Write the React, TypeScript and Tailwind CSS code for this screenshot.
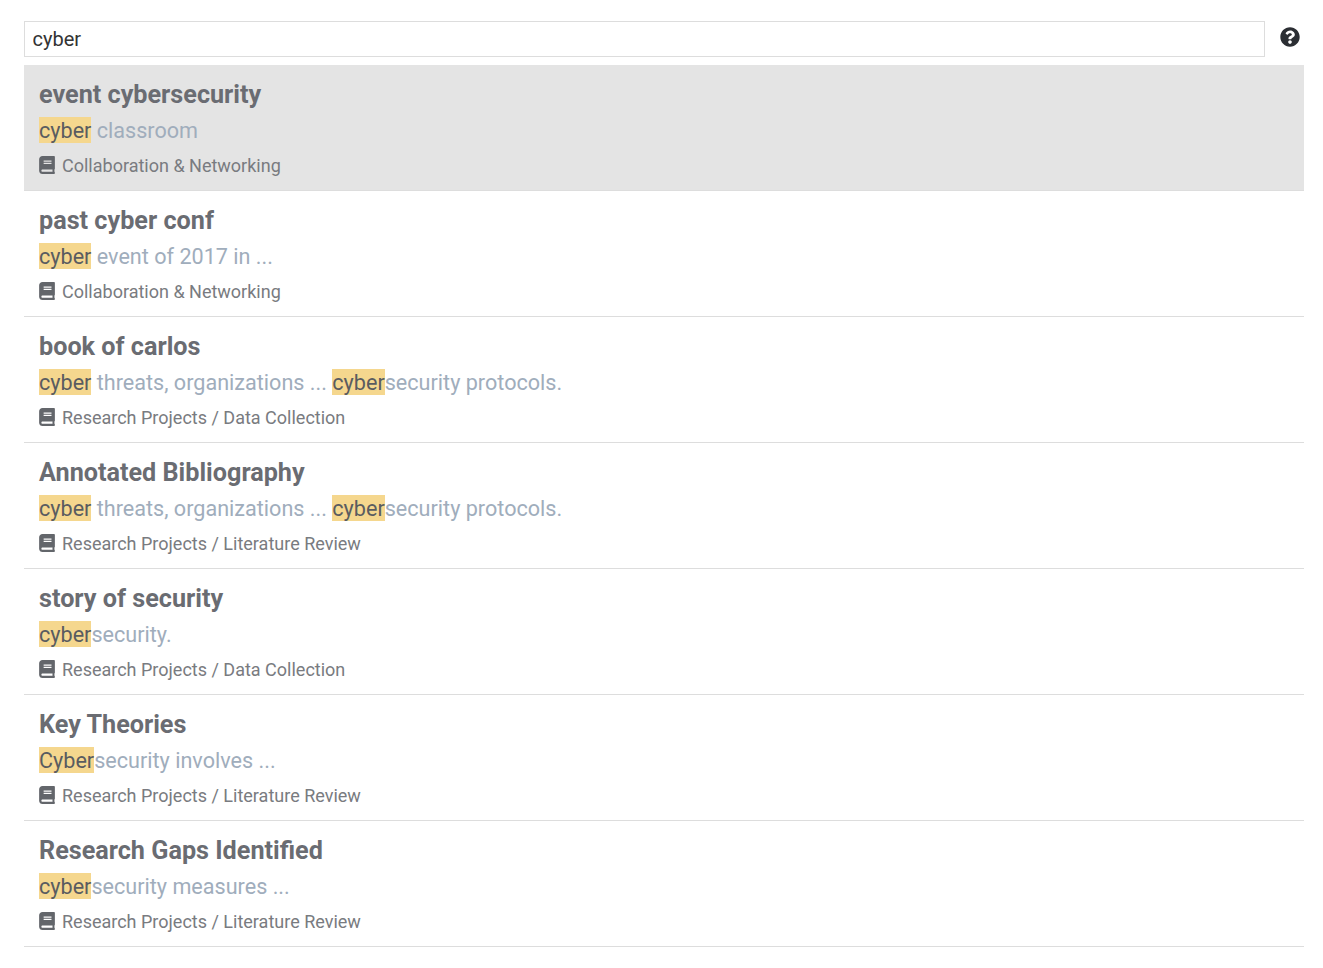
import { FaBook, FaQuestionCircle } from "react-icons/fa";

type Part = { text: string; hit?: boolean };

interface Result {
  title: string;
  snippet: Part[];
  path: string;
}

const results: Result[] = [
  {
    title: "event cybersecurity",
    snippet: [{ text: "cyber", hit: true }, { text: " classroom" }],
    path: "Collaboration & Networking",
  },
  {
    title: "past cyber conf",
    snippet: [{ text: "cyber", hit: true }, { text: " event of 2017 in ..." }],
    path: "Collaboration & Networking",
  },
  {
    title: "book of carlos",
    snippet: [
      { text: "cyber", hit: true },
      { text: " threats, organizations ... " },
      { text: "cyber", hit: true },
      { text: "security protocols." },
    ],
    path: "Research Projects / Data Collection",
  },
  {
    title: "Annotated Bibliography",
    snippet: [
      { text: "cyber", hit: true },
      { text: " threats, organizations ... " },
      { text: "cyber", hit: true },
      { text: "security protocols." },
    ],
    path: "Research Projects / Literature Review",
  },
  {
    title: "story of security",
    snippet: [{ text: "cyber", hit: true }, { text: "security." }],
    path: "Research Projects / Data Collection",
  },
  {
    title: "Key Theories",
    snippet: [{ text: "Cyber", hit: true }, { text: "security involves ..." }],
    path: "Research Projects / Literature Review",
  },
  {
    title: "Research Gaps Identified",
    snippet: [{ text: "cyber", hit: true }, { text: "security measures ..." }],
    path: "Research Projects / Literature Review",
  },
];

function ResultRow({ result, active }: { result: Result; active: boolean }) {
  return (
    <div
      className={`h-[126px] border-b border-[#dddddd] px-[15px] pt-[14px] ${
        active ? "bg-[#e4e4e4]" : "bg-white"
      }`}
    >
      <div className="h-[32px] text-[25.2px] leading-[32px] font-bold text-[#6a6c72]">
        {result.title}
      </div>
      <div className="mt-[6px] h-[26px] text-[21.6px] leading-[26px] whitespace-pre text-[#a0adbc]">
        {result.snippet.map((part, i) =>
          part.hit ? (
            <mark
              key={i}
              className="inline-block h-[26px] bg-[#f5d78e] leading-[28px] text-[#5a5c60]"
            >
              {part.text}
            </mark>
          ) : (
            <span key={i}>{part.text}</span>
          ),
        )}
      </div>
      <div className="mt-[9px] flex h-[26px] items-center text-[18px] text-[#797b80]">
        <FaBook className="mr-[7px] h-[18px] w-[16px] text-[#63666b]" />
        <span>{result.path}</span>
      </div>
    </div>
  );
}

export default function App() {
  return (
    <div className="min-h-[968px] bg-white px-[24px] pt-[21px] font-['Roboto',sans-serif]">
      <div className="flex items-start">
        <input
          readOnly
          value="cyber"
          className="h-[36px] w-[1241px] shrink-0 border border-[#dddddd] px-[7.5px] text-[20px] text-[#333333] outline-none"
        />
        <FaQuestionCircle className="mt-[6px] ml-[15px] h-[20px] w-[20px] shrink-0 text-[#2b2e33]" />
      </div>
      <div className="mt-[8px] w-[1280px]">
        {results.map((result, i) => (
          <ResultRow key={result.title} result={result} active={i === 0} />
        ))}
      </div>
    </div>
  );
}
